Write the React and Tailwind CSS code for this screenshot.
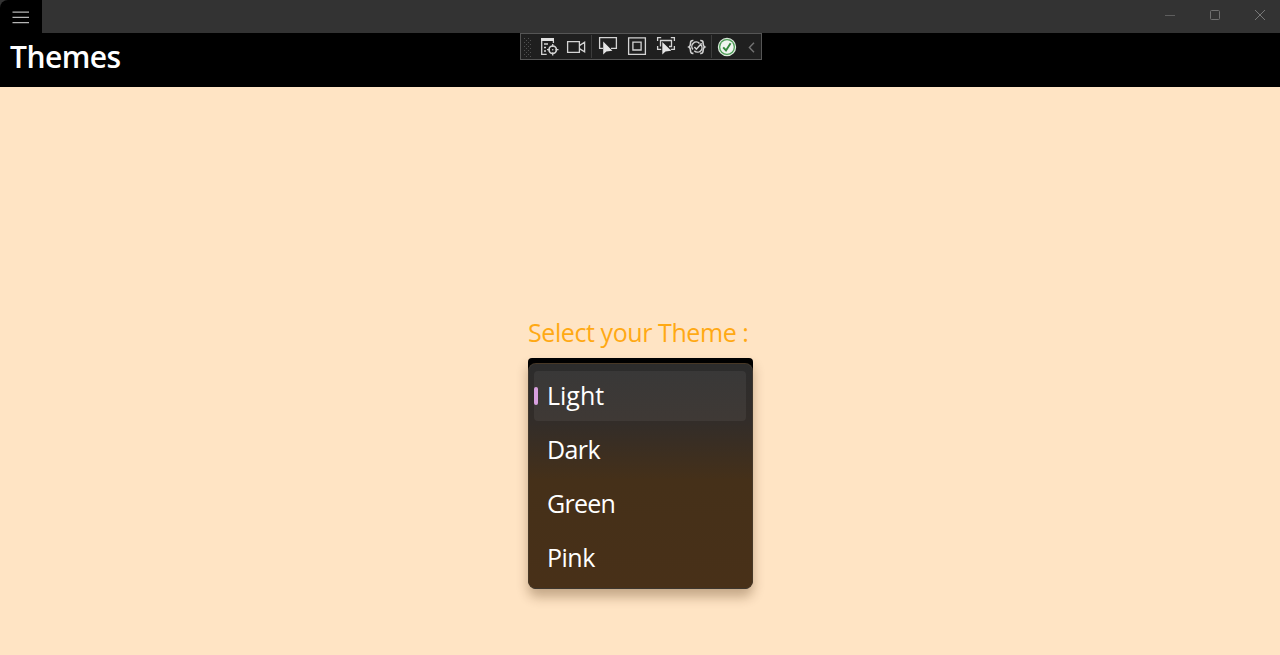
const themes = [
  { name: "Light", tracking: "tracking-normal" },
  { name: "Dark", tracking: "tracking-[-0.6px]" },
  { name: "Green", tracking: "tracking-[-0.75px]" },
  { name: "Pink", tracking: "tracking-[-0.5px]" },
];

function DebugToolbar() {
  return (
    <div className="absolute left-[520px] top-[33px] h-[27px] w-[242px] border border-[#555] bg-[#1f1f1f]">
      <svg className="block" width="240" height="25" viewBox="521 34 240 25" fill="none" stroke="#d4d4d4" strokeWidth="1.3">
        <g fill="#505050" stroke="none">
          {[38, 42, 46, 50, 54].map((y) => (
            <g key={y}>
              <rect x="524" y={y} width="1" height="1" />
              <rect x="528" y={y} width="1" height="1" />
              <rect x="526" y={y + 2} width="1" height="1" />
              <rect x="530" y={y + 2} width="1" height="1" />
            </g>
          ))}
        </g>
        <path d="M591.5 35v23M711.5 35v23" stroke="#3c3c3c" strokeWidth="1" />
        {/* live visual tree */}
        <rect x="541" y="38" width="13" height="3" fill="#e0e0e0" stroke="none" />
        <path d="M541.7 41v13.3h5M544 44h4M544 47.5h2M544 51h2M553.4 41v2" />
        <circle cx="552.7" cy="49.7" r="3.7" strokeWidth="1.7" />
        <path d="M552.7 44v3M552.7 52.5v3M547 49.7h3M555.5 49.7h3" />
        <circle cx="552.7" cy="49.7" r=".8" fill="#d4d4d4" stroke="none" />
        {/* camera */}
        <path d="M567.6 41.6h11.8v10.8h-11.8zM579.4 45.6l5.2-3.3v9.6l-5.2-3.3" />
        {/* select element */}
        <path d="M603 48.4h-3.4V37.7h16.8v10.7H611" />
        <path d="M603.2 41.5v13.1l3.2-3.2 6-.7z" fill="#e5e5e5" stroke="none" />
        {/* layout adorners */}
        <path d="M628.6 37.9h16.8v16.5h-16.8zM632.9 42.2h8.2v7.8h-8.2z" />
        {/* track focused element */}
        <path d="M657.6 41v-3.4h3.6M670.8 37.6h3.6V41M657.6 46v3.4h3.6M670.8 49.4h3.6V46M660.5 46.5v-6h11v6H669" />
        <path d="M662.3 42v12.6l3.2-3.2 5.8-.7z" fill="#e5e5e5" stroke="none" />
        {/* hot reload bindings */}
        <path d="M693.4 40.5c-2.3-.2-2.9 1-2.9 2.8 0 1.8-.3 3-1.6 3.7 1.3.7 1.6 1.8 1.6 3.6 0 1.8.6 3 2.9 2.8M700.2 40.5c2.3-.2 2.9 1 2.9 2.8 0 1.8.3 3 1.6 3.7-1.3.7-1.6 1.8-1.6 3.6 0 1.8-.6 3-2.9 2.8" strokeWidth="1.6" />
        <path d="M693 49.5a4.4 4.4 0 0 1 6.5-6M700.8 44.7a4.4 4.4 0 0 1-6.5 6M694.4 47l2 2.2 5.2-6" strokeWidth="1.5" />
        {/* status */}
        <circle cx="727" cy="47" r="8.6" fill="#4c9c55" stroke="#dcebdd" strokeWidth="1.2" />
        <circle cx="727" cy="47" r="6.7" fill="#f0f5f0" stroke="none" />
        <path d="M723.2 47.3l2.8 3.2 4.6-7.2" stroke="#33873c" strokeWidth="1.9" />
        <path d="M754 42.7l-4.6 4.8 4.6 4.8" stroke="#747474" strokeWidth="1.4" />
      </svg>
    </div>
  );
}

function TitleBar() {
  return (
    <div className="flex h-[33px] items-stretch bg-[#333333]">
      <button aria-label="Menu" className="flex w-[42px] items-center rounded-tl-lg bg-black pl-3">
        <svg width="18" height="14" viewBox="0 0 18 14" stroke="#b5b5b5" strokeWidth="1.2">
          <path d="M.5 2.2h16.5M.5 7.4h16.5M.5 12.7h16.5" />
        </svg>
      </button>
      <div className="ml-auto flex items-center gap-[33px] pr-[14px] pb-[3px]">
        <svg width="12" height="12" fill="none" stroke="#5e5e5e"><path d="M1 6.5h10" /></svg>
        <svg width="12" height="12" fill="none" stroke="#707070"><rect x="1.5" y="1.5" width="9" height="9" rx="1" /></svg>
        <svg width="12" height="12" fill="none" stroke="#777"><path d="M1 1l10 10M11 1L1 11" /></svg>
      </div>
    </div>
  );
}

export default function App() {
  return (
    <div className="relative flex h-[655px] w-[1280px] flex-col overflow-hidden bg-[#ffe4c4] font-['Open_Sans','Noto_Sans',sans-serif]">
      <TitleBar />
      <header className="h-[54px] bg-black pl-2.5 pt-1">
        <h1 className="text-[30px] leading-[40px] font-semibold tracking-[-0.55px] text-white">Themes</h1>
      </header>
      <DebugToolbar />
      <main className="flex flex-col pl-[528px] pt-[228px]">
        <label className="h-[43px] whitespace-nowrap text-[25px] leading-[35px] tracking-[-0.42px] text-[#ffa914]">Select your Theme :</label>
        <div className="w-[225px] rounded-[4px] rounded-b-[9px] bg-black pt-[5px] shadow-[0_8px_12px_rgba(70,40,10,0.32)]">
          <ul className="flex h-[226px] flex-col gap-[4px] rounded-[8px] border border-[#4a3d30]/60 bg-[linear-gradient(180deg,#2c2c2c_0%,#332d29_26%,#453019_52%,#483018_100%)] px-[5px] pt-[7px]">
            {themes.map((theme, i) => (
              <li
                key={theme.name}
                className={`flex h-[50px] shrink-0 items-center rounded-[4px] pb-px text-[25px] leading-none text-white ${theme.tracking} ${i === 0 ? "mr-px bg-white/[0.06]" : ""}`}
              >
                <span className={`mr-[9px] h-[18px] w-1 rounded-[2px] ${i === 0 ? "bg-[#d8a0df]" : ""}`} />
                {theme.name}
              </li>
            ))}
          </ul>
        </div>
      </main>
    </div>
  );
}
